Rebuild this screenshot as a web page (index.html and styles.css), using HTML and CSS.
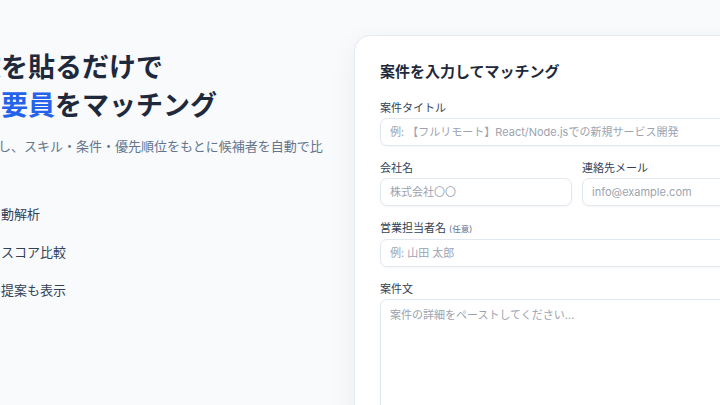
FILE: index.html
```html
<!DOCTYPE html>
<html lang="ja">
<head>
<meta charset="utf-8">
<title>案件マッチング</title>
<link rel="stylesheet" href="styles.css">
</head>
<body>
<main class="hero">
  <section class="intro">
    <h1 class="intro-title">案件文を貼るだけで<br>最適な<span class="accent">要員</span>をマッチング</h1>
    <p class="intro-lead">案件文を解析し、スキル・条件・優先順位をもとに候補者を自動で比較します。</p>
    <ul class="features">
      <li class="feature"><span class="feature-icon"></span><span>要件を自動解析</span></li>
      <li class="feature"><span class="feature-icon"></span><span>候補者をスコア比較</span></li>
      <li class="feature"><span class="feature-icon"></span><span>代替案の提案も表示</span></li>
    </ul>
  </section>

  <section class="card">
    <h2 class="card-title">案件を入力してマッチング</h2>
    <form class="form">
      <label class="field">
        <span class="field-label">案件タイトル</span>
        <input class="input" type="text" placeholder="例: 【フルリモート】React/Node.jsでの新規サービス開発">
      </label>
      <div class="field-row">
        <label class="field">
          <span class="field-label">会社名</span>
          <input class="input" type="text" placeholder="株式会社〇〇">
        </label>
        <label class="field">
          <span class="field-label">連絡先メール</span>
          <input class="input" type="email" placeholder="info@example.com">
        </label>
      </div>
      <label class="field">
        <span class="field-label">営業担当者名 <small class="optional">(任意)</small></span>
        <input class="input" type="text" placeholder="例: 山田 太郎">
      </label>
      <label class="field">
        <span class="field-label">案件文</span>
        <textarea class="input textarea" placeholder="案件の詳細をペーストしてください..."></textarea>
      </label>
    </form>
  </section>
</main>
</body>
</html>
```

FILE: styles.css
```css
* {
  box-sizing: border-box;
}

html,
body {
  margin: 0;
  height: 100%;
}

body {
  display: flex;
  justify-content: center;
  overflow: hidden;
  background: #f8fafc;
  font-family: Inter, "Noto Sans CJK JP", sans-serif;
  color: #1e293b;
}

.hero {
  flex: none;
  width: 880px;
  display: grid;
  grid-template-columns: 410px 446px;
  column-gap: 24px;
  align-items: start;
  padding-top: 35px;
}

/* left column */
.intro {
  padding-top: 14px;
}

.intro-title {
  margin: 0;
  font-size: 27px;
  line-height: 38px;
  font-weight: 700;
  color: #1e293b;
}

.accent {
  color: #2563eb;
}

.intro-lead {
  margin: 10px 0 0;
  font-size: 13px;
  line-height: 22px;
  color: #64748b;
}

.features {
  list-style: none;
  margin: 24px 0 0;
  padding: 0;
  display: flex;
  flex-direction: column;
  gap: 16px;
}

.feature {
  display: flex;
  align-items: center;
  gap: 9px;
  font-size: 13px;
  line-height: 22px;
  color: #334155;
}

.feature-icon {
  width: 20px;
  height: 20px;
  border-radius: 50%;
  background: #dbeafe;
  flex: none;
}

/* form card */
.card {
  background: #ffffff;
  border: 1px solid #e5e9f0;
  border-radius: 16px;
  box-shadow: 0 8px 28px rgba(15, 23, 42, 0.06);
  padding: 24px 25px 40px;
  min-height: 420px;
}

.card-title {
  margin: 0 0 16px;
  font-size: 15px;
  line-height: 24px;
  font-weight: 700;
  color: #1e293b;
}

.form {
  display: flex;
  flex-direction: column;
  gap: 14px;
}

.field {
  display: flex;
  flex-direction: column;
  gap: 2px;
}

.field-row {
  display: grid;
  grid-template-columns: 1fr 1fr;
  column-gap: 10px;
}

.field-label {
  font-size: 11px;
  line-height: 16px;
  color: #334155;
}

.optional {
  font-size: 8.5px;
  color: #64748b;
}

.input {
  height: 28px;
  width: 100%;
  border: 1px solid #e2e8f0;
  border-radius: 7px;
  background: #ffffff;
  box-shadow: 0 1px 2px rgba(15, 23, 42, 0.04);
  padding: 0 9px;
  font-family: inherit;
  font-size: 11px;
  color: #1e293b;
  outline: none;
}

.input::placeholder {
  color: #9ca3af;
}

.textarea {
  height: 180px;
  padding: 7px 9px;
  line-height: 16px;
  resize: none;
}
```
